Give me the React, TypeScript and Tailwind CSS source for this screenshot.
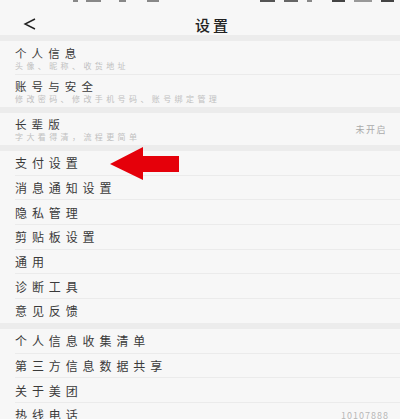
import React from "react";

const font = { fontFamily: '"Noto Sans CJK SC", "Noto Sans", sans-serif' };

function Sep() {
  return <div className="ml-[15px] h-px bg-[#ebebeb]" />;
}

function Band() {
  return <div className="h-[6px] bg-[#ececec]" />;
}

function Row({ title, right, last }: { title: string; right?: string; last?: boolean }) {
  return (
    <>
      <div className="flex h-[23.7px] items-center justify-between pl-[15px] pr-[11px] pt-[1px]">
        <span className="text-[12px] leading-[14px] tracking-[4.9px] text-[#3a3a3a]">{title}</span>
        {right && <span className="text-[9px] leading-[11px] tracking-[1px] text-[#b8b8b8]">{right}</span>}
      </div>
      {!last && <Sep />}
    </>
  );
}

function Row2({ title, sub, right, h }: { title: string; sub: string; right?: string; h: string }) {
  return (
    <div className={`flex ${h} items-center justify-between pl-[15px] pr-[13px]`}>
      <div className="flex flex-col gap-[2px] pt-[1px]">
        <span className="text-[11.5px] leading-[12px] tracking-[5.1px] text-[#3a3a3a]">{title}</span>
        <span className="text-[8px] leading-[9px] tracking-[3.4px] text-[#c0c0c0]">{sub}</span>
      </div>
      {right && <span className="text-[9px] leading-[11px] tracking-[1.5px] text-[#aaaaaa]">{right}</span>}
    </div>
  );
}

function Bit({ w, c }: { w: string; c: string }) {
  return <div className={`h-[2px] ${w} ${c}`} />;
}

export default function App() {
  return (
    <div className="relative h-[419px] w-[400px] overflow-hidden bg-[#f7f7f7]" style={font}>
      {/* cut-off status bar */}
      <div className="flex h-[3px] items-start">
        <div className="flex w-[260px] gap-[8px] pl-[73px]">
          <Bit w="w-[5px]" c="bg-[#888]" />
          <Bit w="w-[15px]" c="bg-[#888]" />
          <div className="w-[2px]" />
          <Bit w="w-[7px]" c="bg-[#888]" />
          <div className="w-[5px]" />
          <Bit w="w-[12px]" c="bg-[#888]" />
        </div>
        <div className="flex flex-1 gap-[9px]">
          <Bit w="w-[15px]" c="bg-[#555]" />
          <Bit w="w-[14px]" c="bg-[#666]" />
          <Bit w="w-[5px]" c="bg-[#888]" />
          <div className="w-[2px]" />
          <Bit w="w-[13px]" c="bg-[#444]" />
          <Bit w="w-[18px]" c="bg-[#999]" />
          <Bit w="w-[13px]" c="bg-[#444]" />
        </div>
      </div>
      {/* header */}
      <div className="flex h-[32px] items-center pl-[23px] pt-[10px]">
        <svg width="13" height="12" viewBox="0 0 13 12">
          <polyline points="12,1 2,6 12,11" fill="none" stroke="#222" strokeWidth="1.4" />
        </svg>
        <span className="ml-[159px] text-[15px] font-medium leading-none tracking-[3px] text-[#222]">设置</span>
      </div>
      <div className="h-[6px] bg-[#ececec]" />
      <Row2 title="个人信息" sub="头像、昵称、收货地址" h="h-[33px]" />
      <Sep />
      <Row2 title="账号与安全" sub="修改密码、修改手机号码、账号绑定管理" h="h-[32px]" />
      <Band />
      <Row2 title="长辈版" sub="字大看得清，流程更简单" right="未开启" h="h-[32px]" />
      <Band />
      <Row title="支付设置" />
      <Row title="消息通知设置" />
      <Row title="隐私管理" />
      <Row title="剪贴板设置" />
      <Row title="通用" />
      <Row title="诊断工具" />
      <Row title="意见反馈" last />
      <Band />
      <Row title="个人信息收集清单" />
      <Row title="第三方信息数据共享" />
      <Row title="关于美团" />
      <Row title="热线电话" right="10107888" last />

      {/* red arrow annotation */}
      <svg className="absolute left-[108px] top-[145px]" width="74" height="38" viewBox="0 0 74 38">
        <polygon points="2,19 35,2 35,11 71,11 71,27 35,27 35,35" fill="#e5000a" />
      </svg>
    </div>
  );
}
